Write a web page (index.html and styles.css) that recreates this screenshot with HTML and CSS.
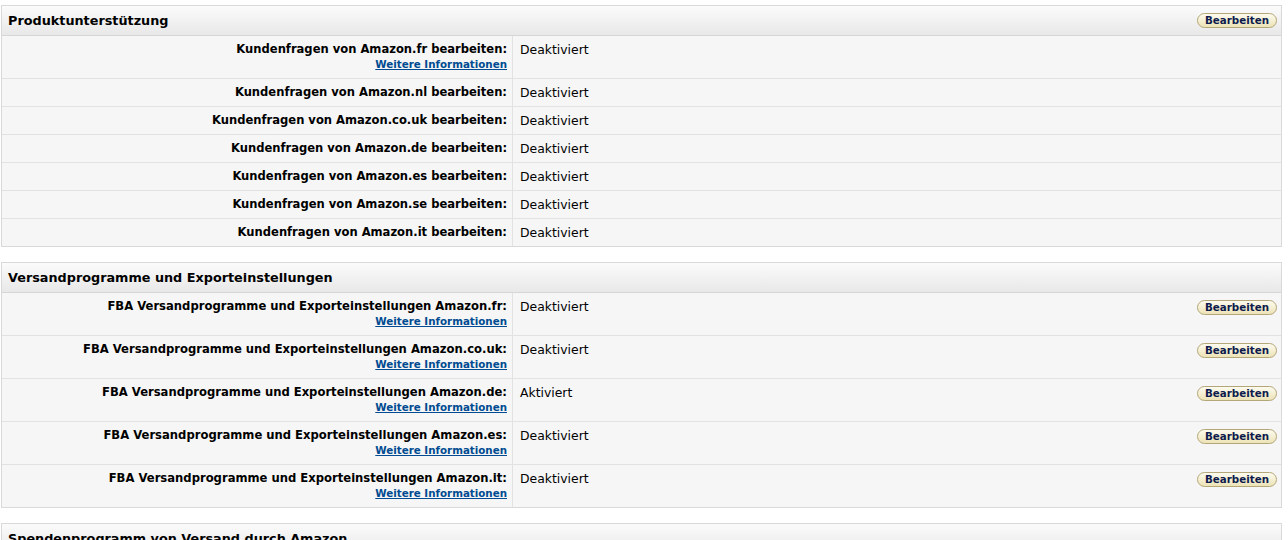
FILE: index.html
```html
<!DOCTYPE html>
<html lang="de">
<head>
    <title>Einstellungen</title>
    <link rel="stylesheet" href="styles.css">
</head>
<body>
    <div class="section">
        <div class="section-head">
            <span>Produktunterstützung</span>
            <button class="btn">Bearbeiten</button>
        </div>
        <div class="row">
            <div class="label">Kundenfragen von Amazon.fr bearbeiten:<a href="#">Weitere Informationen</a></div>
            <div class="value">Deaktiviert</div>
        </div>
        <div class="row">
            <div class="label">Kundenfragen von Amazon.nl bearbeiten:</div>
            <div class="value">Deaktiviert</div>
        </div>
        <div class="row">
            <div class="label">Kundenfragen von Amazon.co.uk bearbeiten:</div>
            <div class="value">Deaktiviert</div>
        </div>
        <div class="row">
            <div class="label">Kundenfragen von Amazon.de bearbeiten:</div>
            <div class="value">Deaktiviert</div>
        </div>
        <div class="row">
            <div class="label">Kundenfragen von Amazon.es bearbeiten:</div>
            <div class="value">Deaktiviert</div>
        </div>
        <div class="row">
            <div class="label">Kundenfragen von Amazon.se bearbeiten:</div>
            <div class="value">Deaktiviert</div>
        </div>
        <div class="row">
            <div class="label">Kundenfragen von Amazon.it bearbeiten:</div>
            <div class="value">Deaktiviert</div>
        </div>
    </div>

    <div class="section">
        <div class="section-head">
            <span>Versandprogramme und Exporteinstellungen</span>
        </div>
        <div class="row">
            <div class="label wide">FBA Versandprogramme und Exporteinstellungen Amazon.fr:<a href="#">Weitere Informationen</a></div>
            <div class="value">Deaktiviert</div>
            <div class="action"><button class="btn">Bearbeiten</button></div>
        </div>
        <div class="row">
            <div class="label wide">FBA Versandprogramme und Exporteinstellungen Amazon.co.uk:<a href="#">Weitere Informationen</a></div>
            <div class="value">Deaktiviert</div>
            <div class="action"><button class="btn">Bearbeiten</button></div>
        </div>
        <div class="row">
            <div class="label wide">FBA Versandprogramme und Exporteinstellungen Amazon.de:<a href="#">Weitere Informationen</a></div>
            <div class="value">Aktiviert</div>
            <div class="action"><button class="btn">Bearbeiten</button></div>
        </div>
        <div class="row">
            <div class="label wide">FBA Versandprogramme und Exporteinstellungen Amazon.es:<a href="#">Weitere Informationen</a></div>
            <div class="value">Deaktiviert</div>
            <div class="action"><button class="btn">Bearbeiten</button></div>
        </div>
        <div class="row">
            <div class="label wide">FBA Versandprogramme und Exporteinstellungen Amazon.it:<a href="#">Weitere Informationen</a></div>
            <div class="value">Deaktiviert</div>
            <div class="action"><button class="btn">Bearbeiten</button></div>
        </div>
    </div>

    <div class="section">
        <div class="section-head">
            <span>Spendenprogramm von Versand durch Amazon</span>
        </div>
    </div>
</body>
</html>
```

FILE: styles.css
```css
body {
    margin: 0;
    padding: 5px 6px 0 1px;
    font-family: "DejaVu Sans", Verdana, sans-serif;
    font-size: 12px;
    color: #000;
    background: #fff;
}
.section {
    border: 1px solid #d9d9d9;
    background: #f6f6f6;
    margin-bottom: 15px;
}
.section-head {
    display: flex;
    justify-content: space-between;
    align-items: center;
    height: 29px;
    padding: 0 4px 0 6px;
    background: linear-gradient(#fbfbfb, #e8e8e8);
    border-bottom: 1px solid #d6d6d6;
    font-weight: bold;
    font-size: 12.8px;
}
.row {
    display: grid;
    grid-template-columns: 511px 1fr auto;
    border-bottom: 1px solid #e2e2e2;
}
.row:last-child {
    border-bottom: none;
}
.label {
    display: flex;
    flex-direction: column;
    align-items: flex-end;
    padding: 6px 5px 6px 0;
    border-right: 1px solid #e2e2e2;
    font-weight: bold;
    font-size: 11.55px;
    line-height: 15px;
}
.label.wide {
    font-size: 11.6px;
}
.label a {
    font-size: 10.3px;
    line-height: 15px;
    color: #004b91;
}
.value {
    padding: 6px 7px;
    font-size: 12.4px;
    line-height: 15px;
}
.action {
    padding: 7px 4px 0 0;
}
.btn {
    height: 15px;
    padding: 0 7px;
    border: 1px solid #b3a779;
    border-radius: 8px;
    background: linear-gradient(#fdfbef, #ede3b7);
    color: #0e1b4d;
    font-family: "DejaVu Sans", Verdana, sans-serif;
    font-weight: bold;
    font-size: 10.3px;
    line-height: 13px;
    cursor: pointer;
}
```
